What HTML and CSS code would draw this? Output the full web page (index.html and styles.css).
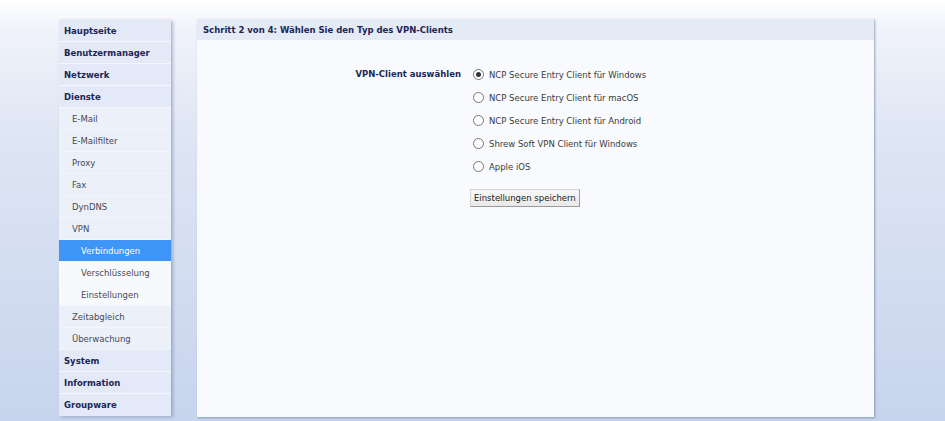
FILE: index.html
```html
<!DOCTYPE html>
<html lang="de">
<head>
<meta charset="utf-8">
<title>VPN</title>
<link rel="stylesheet" href="styles.css">
</head>
<body>
<div class="page">
  <nav class="sidebar">
    <a class="item top">Hauptseite</a>
    <a class="item top">Benutzermanager</a>
    <a class="item top">Netzwerk</a>
    <a class="item top">Dienste</a>
    <a class="item sub">E-Mail</a>
    <a class="item sub">E-Mailfilter</a>
    <a class="item sub">Proxy</a>
    <a class="item sub">Fax</a>
    <a class="item sub">DynDNS</a>
    <a class="item sub">VPN</a>
    <a class="item subsub active">Verbindungen</a>
    <a class="item subsub">Verschlüsselung</a>
    <a class="item subsub">Einstellungen</a>
    <a class="item sub">Zeitabgleich</a>
    <a class="item sub">Überwachung</a>
    <a class="item top">System</a>
    <a class="item top">Information</a>
    <a class="item top last">Groupware</a>
  </nav>
  <main class="panel">
    <div class="panel-head">Schritt 2 von 4: Wählen Sie den Typ des VPN-Clients</div>
    <form class="form">
      <div class="label">VPN-Client auswählen</div>
      <div class="options">
        <label class="opt"><input type="radio" name="c" checked><span>NCP Secure Entry Client für Windows</span></label>
        <label class="opt"><input type="radio" name="c"><span>NCP Secure Entry Client für macOS</span></label>
        <label class="opt"><input type="radio" name="c"><span>NCP Secure Entry Client für Android</span></label>
        <label class="opt"><input type="radio" name="c"><span>Shrew Soft VPN Client für Windows</span></label>
        <label class="opt"><input type="radio" name="c"><span>Apple iOS</span></label>
        <div class="btn-row"><button type="button" class="btn">Einstellungen speichern</button></div>
      </div>
    </form>
  </main>
</div>
</body>
</html>
```
FILE: styles.css
```css
html, body {
  margin: 0;
  padding: 0;
}
body {
  width: 945px;
  height: 421px;
  overflow: hidden;
  font-family: "DejaVu Sans", Verdana, sans-serif;
  font-size: 8.5px;
  color: #3a3a3a;
  background: linear-gradient(to bottom, #ffffff 0px, #f0f3fa 30px, #dfe6f4 130px, #c7d4ed 421px);
}
.page {
  display: flex;
  align-items: flex-start;
  gap: 26px;
  padding: 20px 0 0 59px;
}
.sidebar {
  width: 112px;
  display: flex;
  flex-direction: column;
  box-shadow: 2px 1px 3px rgba(90, 110, 150, 0.45);
}
.item {
  display: flex;
  align-items: center;
  height: 21px;
  border-bottom: 1px solid #f3f6fc;
  padding-left: 5px;
  white-space: nowrap;
}
.item.last {
  border-bottom: 0;
  height: 22px;
}
.top {
  background: #e3e9f6;
  color: #1c2657;
  font-weight: bold;
}
.sub {
  background: #ecf0f9;
  color: #454a58;
  padding-left: 13px;
}
.subsub {
  background: #f7f9fd;
  color: #454a58;
  padding-left: 22px;
}
.subsub.active {
  background: #3d96f5;
  color: #ffffff;
}
.panel {
  width: 677px;
  height: 398px;
  margin-top: -1px;
  background: #f8fafd;
  box-shadow: 1px 1px 2px rgba(90, 110, 150, 0.6);
  display: flex;
  flex-direction: column;
}
.panel-head {
  height: 21px;
  display: flex;
  align-items: center;
  padding-left: 6px;
  background: #e4eaf6;
  color: #1c2657;
  font-weight: bold;
}
.form {
  display: grid;
  grid-template-columns: 264px 1fr;
  column-gap: 12px;
  padding-top: 23px;
}
.label {
  text-align: right;
  font-weight: bold;
  color: #1c2657;
  height: 23px;
  line-height: 23px;
}
.options {
  display: flex;
  flex-direction: column;
}
.opt {
  display: flex;
  align-items: center;
  gap: 5px;
  height: 23px;
  color: #3a3a3a;
}
.opt input {
  appearance: none;
  -webkit-appearance: none;
  margin: 0;
  width: 11px;
  height: 11px;
  border: 1px solid #777;
  border-radius: 50%;
  background: #fff;
  box-sizing: border-box;
  display: grid;
  place-content: center;
}
.opt input:checked::before {
  content: "";
  width: 5px;
  height: 5px;
  border-radius: 50%;
  background: #333;
}
.btn-row {
  padding-top: 11px;
  margin-left: -3px;
}
.btn {
  font-family: "DejaVu Sans", Verdana, sans-serif;
  font-size: 8.5px;
  color: #222;
  height: 18px;
  padding: 0 3px;
  background: linear-gradient(to bottom, #f7f7f7, #e9e9e9);
  border: 1px solid #d4d4d4;
  border-right-color: #9a9a9a;
  border-bottom-color: #9a9a9a;
  border-radius: 0;
}
```
